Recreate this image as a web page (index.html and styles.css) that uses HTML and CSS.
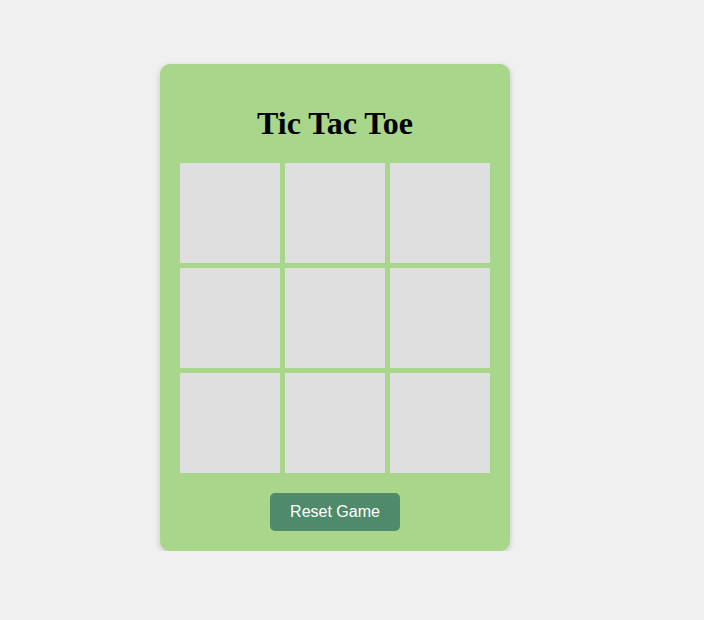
FILE: index.html
```html
<!DOCTYPE html>
<html>
<head>
<meta charset="utf-8">
<link rel="stylesheet" href="styles.css">
</head>
<body>
<div class="page">
  <div class="card">
    <h1 class="title">Tic Tac Toe</h1>
    <div class="board">
      <div class="cell"></div>
      <div class="cell"></div>
      <div class="cell"></div>
      <div class="cell"></div>
      <div class="cell"></div>
      <div class="cell"></div>
      <div class="cell"></div>
      <div class="cell"></div>
      <div class="cell"></div>
    </div>
    <button class="reset">Reset Game</button>
  </div>
</div>
</body>
</html>
```
FILE: styles.css
```css
html, body {
  margin: 0;
  padding: 0;
  background: #f0f0f0;
}
.page {
  display: flex;
  justify-content: flex-start;
  padding: 64px 0 0 160px;
}
.card {
  width: 310px;
  padding: 20px;
  background: #a8d68a;
  border-radius: 10px;
  box-shadow: 0 2px 6px rgba(0,0,0,0.18);
  display: flex;
  flex-direction: column;
  align-items: center;
}
.title {
  font-family: "Liberation Serif", serif;
  font-size: 32px;
  font-weight: bold;
  margin: 21px 0 21px;
  line-height: 37px;
  color: #000;
}
.board {
  display: grid;
  grid-template-columns: repeat(3, 100px);
  grid-template-rows: repeat(3, 100px);
  gap: 5px;
}
.cell {
  background: #dfdfdf;
}
.reset {
  margin-top: 20px;
  width: 130px;
  height: 38px;
  border: none;
  border-radius: 5px;
  background: #4f8b6b;
  color: #fff;
  font-family: "Liberation Sans", sans-serif;
  font-size: 16px;
  padding: 0;
}
```
